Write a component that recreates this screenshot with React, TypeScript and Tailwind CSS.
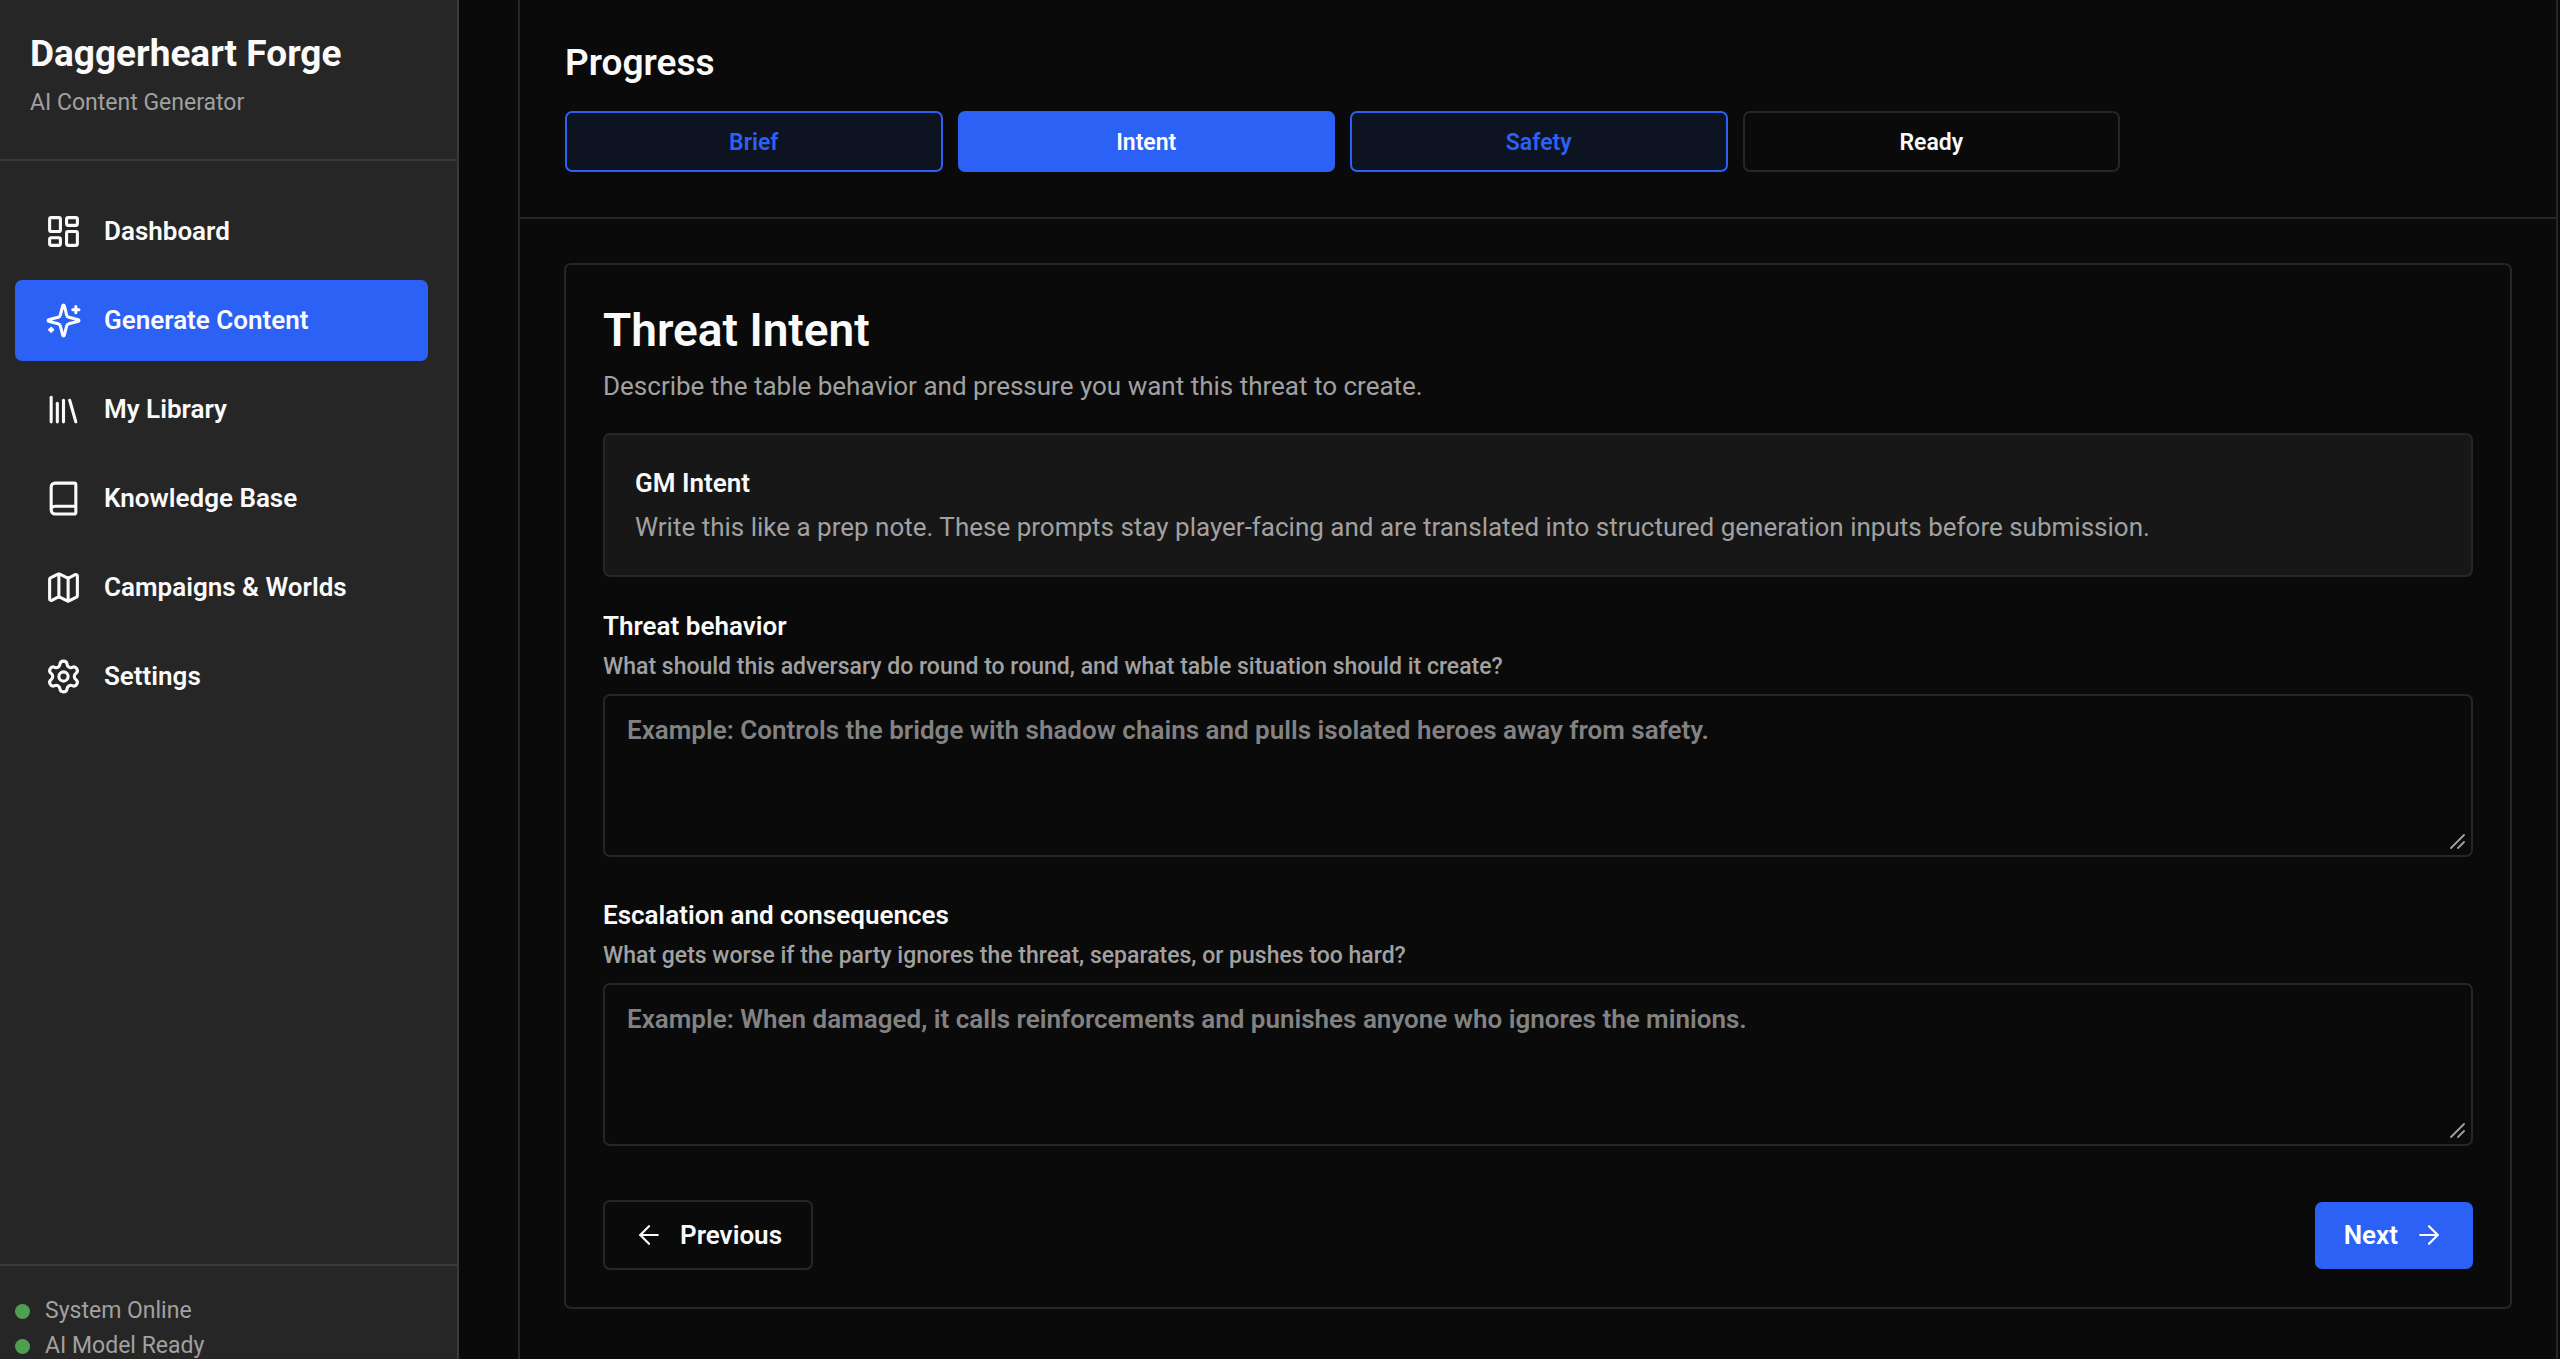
import type { ReactNode } from "react";
import {
  ArrowLeft,
  ArrowRight,
  Book,
  LayoutDashboard,
  Library,
  Map,
  Settings,
} from "lucide-react";
import clsx from "clsx";

const SparklesIcon = ({ className }: { className?: string }) => (
  <svg
    className={className}
    aria-hidden="true"
    xmlns="http://www.w3.org/2000/svg"
    fill="none"
    viewBox="0 0 24 24"
    stroke="currentColor"
    strokeWidth={2}
    strokeLinecap="round"
    strokeLinejoin="round"
  >
    <path d="M9.937 15.5A2 2 0 0 0 8.5 14.063l-6.135-1.582a.5.5 0 0 1 0-.962L8.5 9.936A2 2 0 0 0 9.937 8.5l1.582-6.135a.5.5 0 0 1 .963 0L14.063 8.5A2 2 0 0 0 15.5 9.937l6.135 1.581a.5.5 0 0 1 0 .964L15.5 14.063a2 2 0 0 0-1.437 1.437l-1.582 6.135a.5.5 0 0 1-.963 0z" />
    <path d="M20 3v4M22 5h-4M4 17v2M5 18H3" />
  </svg>
);

const navItems = [
  { label: "Dashboard", icon: LayoutDashboard },
  { label: "Generate Content", icon: SparklesIcon, active: true },
  { label: "My Library", icon: Library },
  { label: "Knowledge Base", icon: Book },
  { label: "Campaigns & Worlds", icon: Map },
  { label: "Settings", icon: Settings },
];

const steps = [
  { label: "Brief", state: "done" },
  { label: "Intent", state: "current" },
  { label: "Safety", state: "done" },
  { label: "Ready", state: "pending" },
];

const StatusRow = ({ children }: { children: ReactNode }) => (
  <li className="flex items-center gap-[15px]">
    <span className="size-[15px] rounded-full bg-[#4f9f50]" />
    {children}
  </li>
);

const Sidebar = () => (
  <aside className="flex w-[459px] shrink-0 flex-col border-r-2 border-[#3a3a3a] bg-[#262626]">
    <div className="border-b-2 border-[#3a3a3a] px-[30px] pt-[31px] pb-[39px]">
      <h1 className="text-[37px] leading-[46px] font-bold">Daggerheart Forge</h1>
      <p className="mt-[9px] text-[23px] leading-[34px] text-[#a1a1a1]">
        AI Content Generator
      </p>
    </div>

    <nav className="flex flex-1 flex-col gap-2 pt-[30px] pr-[29px] pl-[15px]">
      {navItems.map(({ label, icon: Icon, active }) => (
        <a
          key={label}
          href="#"
          aria-current={active ? "page" : undefined}
          className={clsx(
            "flex h-[81px] items-center gap-[22px] rounded-[7px] px-[30px] text-[26px] font-semibold",
            active && "bg-[#2c61f6]",
          )}
        >
          <Icon className="size-[37px]" />
          {label}
        </a>
      ))}
    </nav>

    <ul className="flex h-[95px] flex-col gap-[5px] border-t-2 border-[#3a3a3a] px-[15px] pt-[30px] text-[23px] leading-[30px] text-[#a1a1a1]">
      <StatusRow>System Online</StatusRow>
      <StatusRow>AI Model Ready</StatusRow>
    </ul>
  </aside>
);

const Progress = () => (
  <header className="border-b-2 border-[#262626] px-[45px] pt-[40px] pb-[45px]">
    <h2 className="text-[37px] leading-[46px] font-semibold">Progress</h2>
    <div className="mt-[25px] grid max-w-[1555px] grid-cols-4 gap-[15px]">
      {steps.map(({ label, state }) => (
        <button
          key={label}
          type="button"
          className={clsx(
            "h-[61px] rounded-[7px] border-2 pt-[3px] text-[23px] font-semibold",
            state === "done" && "border-[#2c61f6] bg-[#0d1320] text-[#2c61f6]",
            state === "current" && "border-[#2c61f6] bg-[#2c61f6] text-white",
            state === "pending" && "border-[#262626]",
          )}
        >
          {label}
        </button>
      ))}
    </div>
  </header>
);

type FieldProps = {
  id: string;
  label: string;
  hint: string;
  placeholder: string;
};

const PromptField = ({ id, label, hint, placeholder }: FieldProps) => (
  <div>
    <label htmlFor={id} className="block">
      <span className="block text-[26px] leading-[38px] font-semibold">{label}</span>
      <span className="mt-[5px] block text-[23px] leading-[34px] font-medium text-[#a1a1a1]">
        {hint}
      </span>
    </label>
    <div className="relative mt-[10px]">
      <textarea
        id={id}
        placeholder={placeholder}
        className="block h-[163px] w-full resize-none rounded-[7px] border-2 border-[#262626] bg-transparent px-[22px] py-[14px] text-[26px] leading-[40px] font-semibold placeholder:text-[#828282]"
      />
      {/* resize grip */}
      <svg
        className="absolute right-[8px] bottom-[8px] size-[15px] text-[#a1a1a1]"
        aria-hidden="true"
        viewBox="0 0 15 15"
        fill="none"
        stroke="currentColor"
        strokeWidth={1.8}
        strokeLinecap="round"
      >
        <path d="M1 14 14 1M8 14l6-6" />
      </svg>
    </div>
  </div>
);

const IntentCard = () => (
  <form className="rounded-[7px] border-2 border-[#262626] p-[37px]">
    <h3 className="text-[46px] leading-[56px] font-semibold">Threat Intent</h3>
    <p className="mt-2 text-[26px] leading-[40px] text-[#a1a1a1]">
      Describe the table behavior and pressure you want this threat to create.
    </p>

    <div className="mt-[27px] rounded-[7px] border-2 border-[#262626] bg-[#171717] px-[30px] py-[28px] text-[26px] leading-[40px]">
      <h4 className="font-semibold">GM Intent</h4>
      <p className="mt-1 text-[#a1a1a1]">
        Write this like a prep note. These prompts stay player-facing and are
        translated into structured generation inputs before submission.
      </p>
    </div>

    <div className="mt-[30px] flex flex-col gap-[39px]">
      <PromptField
        id="threat-behavior"
        label="Threat behavior"
        hint="What should this adversary do round to round, and what table situation should it create?"
        placeholder="Example: Controls the bridge with shadow chains and pulls isolated heroes away from safety."
      />
      <PromptField
        id="escalation"
        label="Escalation and consequences"
        hint="What gets worse if the party ignores the threat, separates, or pushes too hard?"
        placeholder="Example: When damaged, it calls reinforcements and punishes anyone who ignores the minions."
      />
    </div>

    <div className="mt-[54px] flex items-center justify-between text-[26px] font-semibold">
      <button
        type="button"
        className="flex h-[70px] items-center gap-4 rounded-[7px] border-2 border-[#262626] px-[29px]"
      >
        <ArrowLeft className="size-[30px]" strokeWidth={1.75} />
        Previous
      </button>
      <button
        type="button"
        className="flex h-[67px] items-center gap-4 rounded-[7px] bg-[#2c61f6] px-[29px] text-white"
      >
        Next
        <ArrowRight className="size-[30px]" strokeWidth={1.75} />
      </button>
    </div>
  </form>
);

const App = () => {
  return (
    <div className="flex h-screen overflow-hidden bg-[#0a0a0a] font-[Roboto,sans-serif] text-[#fafafa]">
      <Sidebar />
      <main className="mr-[2px] ml-[59px] min-w-0 flex-1 overflow-hidden border-x-2 border-[#262626]">
        <Progress />
        <div className="p-[44px]">
          <IntentCard />
        </div>
      </main>
    </div>
  );
};

export default App;
